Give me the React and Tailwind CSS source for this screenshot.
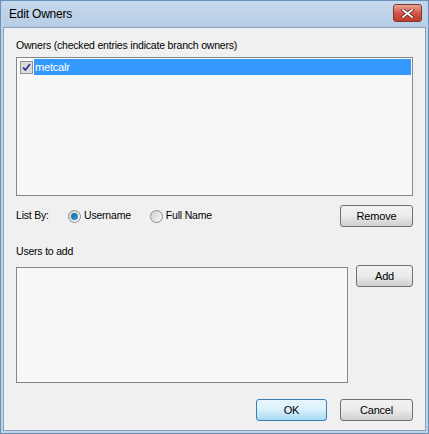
import React from "react";

const font = { fontFamily: '"Liberation Sans", Arial, sans-serif' };

const Button = ({ label, primary, className = "" }) => (
    <button
        className={
            "h-[22px] rounded-[3px] border text-[11px] text-black bg-gradient-to-b " +
            (primary
                ? "border-[#3c7fb1] from-[#eaf6fd] via-[#d9f0fc] to-[#a7d9f5] "
                : "border-[#707070] from-[#f2f2f2] via-[#ebebeb] to-[#cfcfcf] ") +
            className
        }
    >
        {label}
    </button>
);

const Radio = ({ checked, label }) => (
    <label className="flex items-center gap-[3px]">
        <span className="w-[13px] h-[13px] rounded-full border border-[#8e8f8f] bg-gradient-to-br from-[#d0d0d0] to-[#f8f8f8] flex items-center justify-center">
            {checked && <span className="w-[7px] h-[7px] rounded-full bg-gradient-to-br from-[#1a5c94] to-[#38a4e0]" />}
        </span>
        <span>{label}</span>
    </label>
);

const App = () => {
    return (
        <div className="w-[429px] h-[434px] bg-[#6a8fb8] p-px" style={font}>
            <div className="w-full h-full flex flex-col bg-[#bed3e8] px-[2px] pb-[2px]">

                {/**TITLE BAR*/}
                <div className="h-[26px] flex items-center justify-between pl-[6px] pr-[4px] bg-gradient-to-b from-[#c6d9ec] to-[#b6cde5]">
                    <span className="text-[12px] text-black tracking-[-0.2px]">Edit Owners</span>
                    <button className="w-[29px] h-[18px] mb-[2px] rounded-[3px] border border-[#7a3a33] bg-gradient-to-b from-[#e8a493] via-[#d4574a] to-[#c03a28] flex items-center justify-center">
                        <svg width="13" height="9" viewBox="0 0 13 9">
                            <path d="M2 1 L11 8 M11 1 L2 8" stroke="#4a1a14" strokeWidth="3.2" strokeLinecap="square" />
                            <path d="M2 1 L11 8 M11 1 L2 8" stroke="#ffffff" strokeWidth="1.8" strokeLinecap="square" />
                        </svg>
                    </button>
                </div>

                {/**CONTENT*/}
                <div className="flex-1 bg-[#f0f0f0] border border-[#8aa2bd] px-[12px] pt-[10px] text-[10.5px] tracking-[-0.2px] text-black flex flex-col">
                    <p className="h-[15px] leading-[15px]">Owners (checked entries indicate branch owners)</p>

                    <div className="mt-[4px] h-[139px] border border-[#828790] bg-[#f8f8f8] p-px">
                        <div className="flex items-center h-[16px]">
                            <span className="w-[13px] h-[13px] ml-[2px] border border-[#8f8f8f] bg-[#dcdcdc] flex items-center justify-center">
                                <svg width="9" height="9" viewBox="0 0 9 9">
                                    <path d="M1 4.5 L3.5 7 L8 1" fill="none" stroke="#2a3d8f" strokeWidth="1.8" />
                                </svg>
                            </span>
                            <span className="ml-[1px] flex-1 h-[16px] bg-[#3399ff] text-white text-[11px] leading-[16px] pl-px">metcalr</span>
                        </div>
                    </div>

                    {/**LIST BY*/}
                    <div className="mt-[9px] flex items-center justify-between">
                        <div className="flex items-center">
                            <span className="w-[52px]">List By:</span>
                            <Radio checked label="Username" />
                            <span className="w-[19px]" />
                            <Radio label="Full Name" />
                        </div>
                        <Button label="Remove" className="w-[73px]" />
                    </div>

                    <p className="mt-[17px] h-[15px] leading-[15px]">Users to add</p>

                    <div className="mt-[8px] flex justify-between">
                        <div className="w-[332px] h-[116px] border border-[#828790] bg-[#f8f8f8]" />
                        <Button label="Add" className="w-[57px] mt-[-2px]" />
                    </div>

                    <div className="mt-[16px] flex justify-end gap-[13px]">
                        <Button label="OK" primary className="w-[71px]" />
                        <Button label="Cancel" className="w-[73px]" />
                    </div>
                </div>
            </div>
        </div>
    );
};

export default App;
